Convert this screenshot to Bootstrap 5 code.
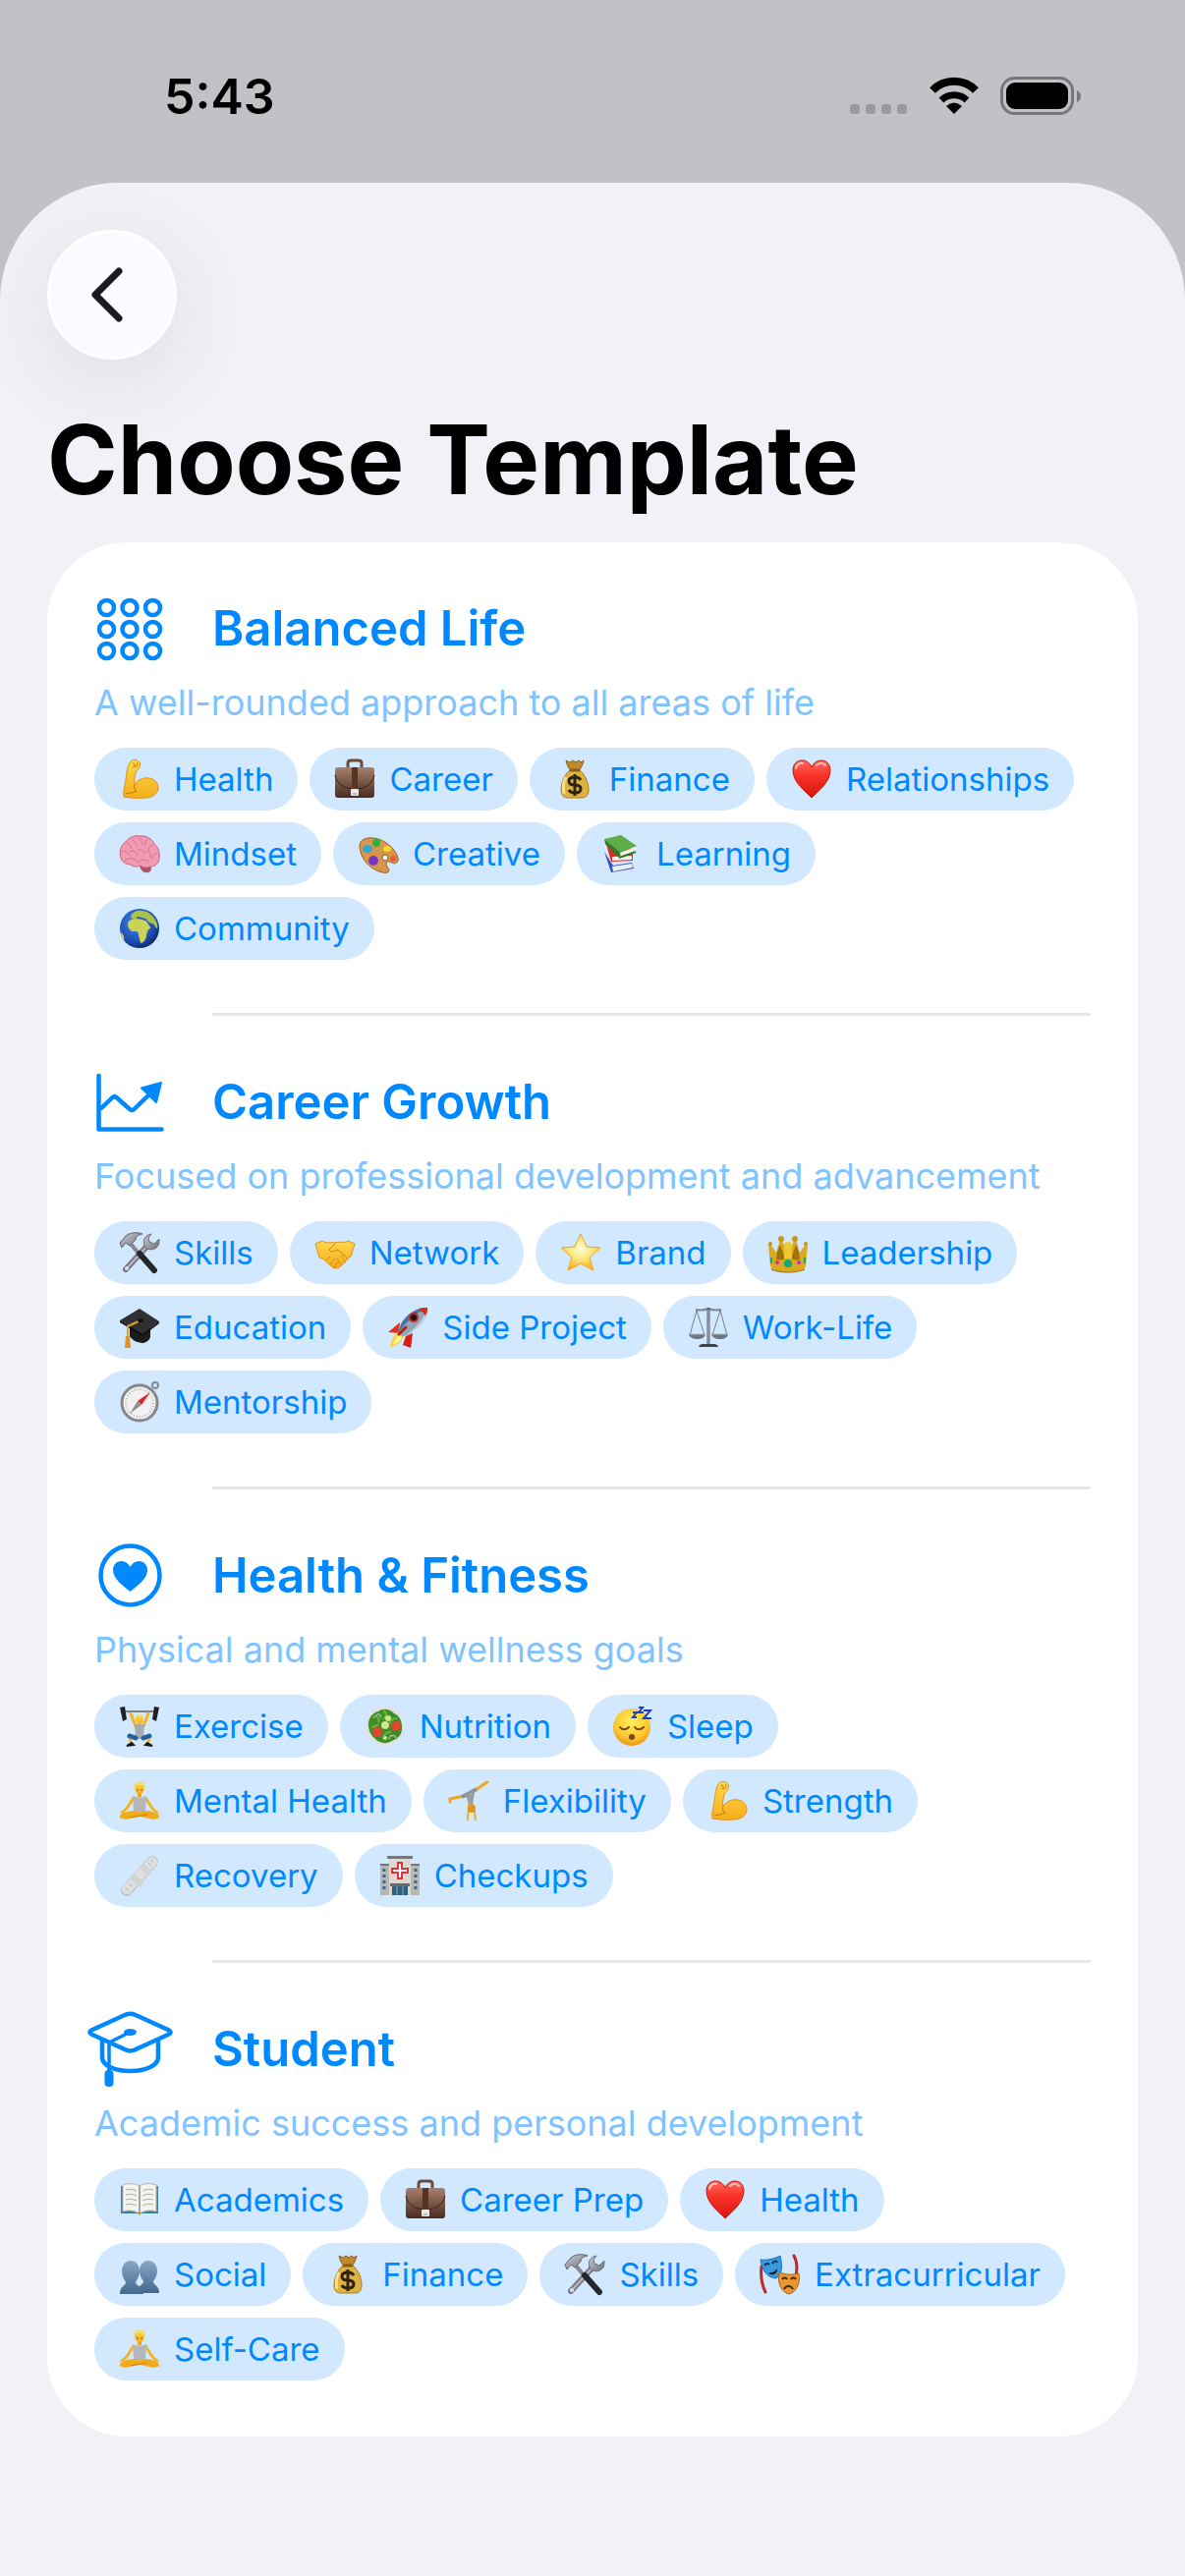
<!DOCTYPE html>
<html lang="en">
<head>
    <meta charset="UTF-8">
    <meta name="viewport" content="width=device-width, initial-scale=1.0">
    <title>Choose Template</title>
    <link rel="stylesheet" href="https://cdn.jsdelivr.net/npm/bootstrap@5.3.0/dist/css/bootstrap.min.css">
    <style>
        body {
            background-color: #c2c1c6;
            font-family: Inter, "Liberation Sans", sans-serif;
            color: #000;
        }
        /* Status bar */
        .status-bar {
            height: 186px;
            padding: 10px 106px 0 167px;
        }
        .status-time {
            font-size: 50px;
            font-weight: 600;
            line-height: 60px;
        }
        /* Sheet */
        .sheet {
            background-color: #f2f1f7;
            border-radius: 120px 120px 0 0;
            padding: 48px 48px 120px;
        }
        .btn-back {
            width: 132px;
            height: 132px;
            background-color: #fbfaff;
            border: 3px solid #fff;
            box-shadow: 0 20px 90px rgba(0, 0, 0, .09);
        }
        .btn-back:hover {
            background-color: #fff;
            border-color: #fff;
        }
        .sheet-title {
            font-size: 97px;
            font-weight: 700;
            line-height: 120px;
            margin: 42px 0 24px;
        }
        /* Template list */
        .template-list {
            --bs-list-group-bg: #fff;
            border-radius: 80px;
            overflow: hidden;
        }
        .template-item {
            padding: 44px 48px 0;
            border: 0;
            color: #08f;
        }
        .template-head {
            height: 88px;
            gap: 48px;
        }
        .template-icon {
            width: 72px;
            height: 88px;
            overflow: visible;
            fill: none;
            stroke: #08f;
            stroke-linecap: round;
            stroke-linejoin: round;
        }
        .template-name {
            font-size: 49px;
            font-weight: 600;
            line-height: 60px;
        }
        .template-text {
            font-size: 36px;
            line-height: 62px;
            margin-bottom: 15px;
            color: #80c3ff;
        }
        .chip-list {
            gap: 12px;
            padding: 0 8px 54px 0;
        }
        .chip {
            height: 64px;
            padding: 0 25px 0 24px;
            gap: 13px;
            border-radius: 32px;
            background-color: #d1e8ff;
            font-size: 33px;
            line-height: 40px;
        }
        .chip svg {
            width: 44px;
            height: 44px;
        }
        .template-rule {
            height: 3px;
            margin-left: 120px;
            background-color: #e6e6e6;
        }
        .template-item:last-child .template-rule {
            background-color: transparent;
        }
    </style>
</head>
<body class="d-flex flex-column min-vh-100">
    <!-- Emoji used on the chips -->
    <svg width="0" height="0" class="d-block" aria-hidden="true">
        <defs>
            <linearGradient id="gold" x1="0" y1="0" x2="0" y2="1"><stop offset="0" stop-color="#ffe04a"/><stop offset="1" stop-color="#f3a31b"/></linearGradient>
            <linearGradient id="skin" x1="0" y1="0" x2="0" y2="1"><stop offset="0" stop-color="#ffd84a"/><stop offset="1" stop-color="#f5ad1c"/></linearGradient>
            <linearGradient id="leather" x1="0" y1="0" x2="0" y2="1"><stop offset="0" stop-color="#a5806c"/><stop offset="1" stop-color="#4a2c20"/></linearGradient>
            <linearGradient id="steel" x1="0" y1="0" x2="1" y2="1"><stop offset="0" stop-color="#c9ccd2"/><stop offset="1" stop-color="#6d7077"/></linearGradient>
            <linearGradient id="red" x1="0" y1="0" x2="0" y2="1"><stop offset="0" stop-color="#ff6a5e"/><stop offset=".4" stop-color="#fb3328"/><stop offset="1" stop-color="#d3160f"/></linearGradient>
            <linearGradient id="slate" x1="0" y1="0" x2="0" y2="1"><stop offset="0" stop-color="#86a7c6"/><stop offset="1" stop-color="#45688f"/></linearGradient>
            <radialGradient id="sea" cx=".4" cy=".35" r=".7"><stop offset="0" stop-color="#3f86e8"/><stop offset=".7" stop-color="#1c4cb4"/><stop offset="1" stop-color="#10245f"/></radialGradient>
            <radialGradient id="face" cx=".5" cy=".35" r=".65"><stop offset="0" stop-color="#fff25c"/><stop offset=".7" stop-color="#fdc530"/><stop offset="1" stop-color="#ee9411"/></radialGradient>
            <radialGradient id="shine" cx=".5" cy=".4" r=".6"><stop offset="0" stop-color="#fffde0"/><stop offset=".5" stop-color="#ffe77a"/><stop offset="1" stop-color="#f9b21c"/></radialGradient>
        </defs>

        <symbol id="e-muscle" viewBox="0 0 44 44">
            <path d="M13 4c2-2 6-2 8 0 2 1 2 4 1 6-1 3-4 3-4 6-1 4-2 8-1 11 3-4 9-7 15-6 6 1 9 6 9 10 0 6-6 10-13 10-9 1-16 0-22-1-1-4 1-11 2-18 1-6 1-13 5-18z" fill="url(#skin)" stroke="#dd9415"/>
            <path d="M15 6c3 0 3 3 0 4M19 5c2 1 1 4-2 5M17 27c-1 4 0 6 2 8M8 37c4-1 8-1 11-3" fill="none" stroke="#bf7a10"/>
        </symbol>
        <symbol id="e-briefcase" viewBox="0 0 44 44">
            <path d="M15 11V6q0-3 3-3h8q3 0 3 3v5" fill="none" stroke="#6e4a39" stroke-width="3"/>
            <rect x="2" y="10" width="40" height="31" rx="3" fill="url(#leather)"/>
            <path d="M2 18c2 9 9 14 20 14s18-5 20-14" fill="none" stroke="#3b2118" stroke-width="1"/>
            <path d="M19 10h6v22h-6z" fill="#56341f"/>
            <rect x="18" y="32" width="8" height="7" rx="1" fill="#e9e9ea"/>
            <path d="M20 37h4" stroke="#8b8b8b"/>
        </symbol>
        <symbol id="e-money" viewBox="0 0 44 44">
            <path d="M13 3l4 2 3-2 3 2 3-2 2 2 3-2c-1 5-3 8-5 11h-8c-2-3-4-6-5-11z" fill="#c08a2c" stroke="#8b5e17"/>
            <path d="M17 13h10c6 5 9 13 9 20 0 6-3 8-7 8H15c-4 0-7-2-7-8 0-7 3-15 9-20z" fill="#dfb143" stroke="#a97b1e"/>
            <path d="M13 20c-3 5-3 12-2 17" fill="none" stroke="#fae184" stroke-width="3"/>
            <path d="M17 13h10" stroke="#8b5e17" stroke-width="3"/>
            <path d="M28 23c-1-2-3-3-6-3-3 0-6 1-6 4s3 4 6 4 6 1 6 4-3 4-6 4-5-1-6-3M22 17v22" fill="none" stroke="#2e2410" stroke-width="3"/>
        </symbol>
        <symbol id="e-heart" viewBox="0 0 44 44">
            <path d="M22 41C15 34 3 25 3 13 3 7 7 3 12 3c4 0 8 2 10 7 2-5 6-7 10-7 5 0 9 4 9 10 0 12-12 21-19 28z" fill="url(#red)" stroke="#c5140d"/>
            <path d="M6 11c1-4 4-6 7-5M27 8c3-3 6-3 9 0" fill="none" stroke="#ffc2bb" stroke-width="2" stroke-linecap="round"/>
        </symbol>
        <symbol id="e-brain" viewBox="0 0 44 44">
            <path d="M22 34c6-2 12-1 12 3 0 3-3 5-6 4-3 0-5-3-6-7z" fill="#a85564"/>
            <path d="M3 26C1 20 3 13 8 10c3-5 9-7 14-6 7-1 13 3 15 8 4 3 6 9 5 14 0 6-4 9-9 9-4 2-8 1-10-1-4 2-8 1-10-1-5 0-9-3-10-7z" fill="#f09bb2" stroke="#c9607c"/>
            <path d="M9 12c3 0 5 2 4 5M15 7c1 3 4 3 4 7M22 5c-1 4 3 4 3 8M30 7c-3 2-1 4-3 7M36 13c-4 0-5 3-4 6M4 20c4-2 6 0 7 3M12 20c4-2 7 0 8 4M20 18c4-1 7 1 6 5M28 20c4-1 6 2 5 6M40 22c-4 0-5 2-5 5M7 29c4-3 9-3 12 0M20 31c4-4 9-3 12-1" fill="none" stroke="#d6708c"/>
        </symbol>
        <symbol id="e-palette" viewBox="0 0 44 44">
            <path d="M3 14c0-6 6-9 14-8 11 1 22 10 25 20 1 5-3 7-6 5-3-1-6-2-6 1s3 5 3 7-3 3-7 2C13 38 3 26 3 14z" fill="#d6964b" stroke="#9a6428"/>
            <ellipse cx="29" cy="26" rx="3" ry="3" fill="#e6f1fc" stroke="#8c5a22"/>
            <ellipse cx="11" cy="17" rx="5" ry="4" fill="#31a6dc"/>
            <ellipse cx="20" cy="11" rx="4" ry="4" fill="#2fb23d"/>
            <ellipse cx="31" cy="17" rx="4" ry="3" fill="#f3d92e"/>
            <ellipse cx="17" cy="29" rx="5" ry="5" fill="#7a34c4"/>
            <ellipse cx="37" cy="27" rx="3" ry="3" fill="#ee5a3a"/>
        </symbol>
        <symbol id="e-books" viewBox="0 0 44 44">
            <path d="M4 20l7 21 23-4-2-6-19 3z" fill="#3a55b5"/>
            <path d="M12 35l20-3 1 4-20 4z" fill="#edf0f7"/>
            <path d="M6 12l5 18 22-1V17z" fill="#d92c22"/>
            <path d="M12 25l20-1v4l-20 1z" fill="#f6efe9"/>
            <path d="M4 7L21 3l16 11-17 7z" fill="#5cae4b"/>
            <path d="M4 7l16 14-1 5L5 12z" fill="#2e7d2c"/>
            <path d="M20 21l16-6v5l-15 6z" fill="#f2f2ee"/>
            <path d="M19 26l17-6" stroke="#2e7d2c" stroke-width="2"/>
        </symbol>
        <symbol id="e-globe" viewBox="0 0 44 44">
            <circle cx="22" cy="22" r="20" fill="url(#sea)"/>
            <path d="M10 17c1-4 6-5 10-5 4 0 8 1 10 4 1 3 4 4 3 6-3 1-3 4-4 7 0 4-3 7-5 8-2-1-2-5-3-8 0-3-1-4-4-4-4 1-7-3-7-8z" fill="#cbd357"/>
            <path d="M13 10c1-4 6-7 11-6 6 0 11 4 14 9 2 4 3 7 2 9-2 0-2-4-5-5-2 0-4-2-6-4-3-1-4-3-7-2-2 2-6 3-9-1z" fill="#a9c24a"/>
            <path d="M3 26c2 1 4 5 3 8-2-2-3-5-3-8z" fill="#cbd357"/>
            <path d="M19 11c4 0 7 2 10 2" stroke="#2a62c4" stroke-width="2"/>
        </symbol>
        <symbol id="e-tools" viewBox="0 0 44 44">
            <path d="M30 15L8 39" stroke="#7b7681" stroke-width="6" stroke-linecap="round"/>
            <path d="M30 15L9 38" stroke="#b9bac1" stroke-width="2"/>
            <path d="M34 3c-6 1-9 6-7 12 2 4 8 5 12 2 3-2 3-6 3-9l-5 5-5-2-1-4z" fill="url(#steel)" stroke="#6b6e75"/>
            <circle cx="9" cy="38" r="2" fill="#d1e8ff"/>
            <path d="M13 13l9 11" stroke="#858891" stroke-width="4"/>
            <path d="M22 23l15 17" stroke="#25262a" stroke-width="6" stroke-linecap="round"/>
            <path d="M2 12l6-7C13 1 20 1 25 3c-5 1-7 3-7 6l-6 6-4-3-4 5z" fill="url(#steel)" stroke="#62656c"/>
        </symbol>
        <symbol id="e-handshake" viewBox="0 0 44 44">
            <path d="M2 13l7-3c4 3 8 1 13 2 5-2 9 1 13-2l7 3-4 13c-3 1-4 3-6 6-3 3-6 6-10 6-4-1-7-5-10-8-2-2-4-2-6-3z" fill="url(#skin)" stroke="#d8920f"/>
            <path d="M22 13l-6 6c1 3 5 2 8 0 4 2 8 6 11 10M13 30l4-4M17 34l4-5M21 37l3-5M28 25l4 6M24 28l4 6" fill="none" stroke="#c9850f" stroke-linecap="round"/>
        </symbol>
        <symbol id="e-star" viewBox="0 0 44 44">
            <path d="M22 3l6 13 14 1-11 10 4 13-13-7-13 7 4-13L2 17l14-1z" fill="url(#shine)" stroke="#eda41b" stroke-linejoin="round"/>
        </symbol>
        <symbol id="e-crown" viewBox="0 0 44 44">
            <path d="M4 36L2 14l2-1 6 9 4-13h2l4 12h4l4-12h2l4 13 6-9 2 1-2 22z" fill="#d9aa20"/>
            <path d="M10 32c0-7 1-12 4-18l5 14zM34 32c0-7-1-12-4-18l-5 14z" fill="#a2710c"/>
            <path d="M4 27c6 4 30 4 36 0l-1 12c-8 4-26 4-34 0z" fill="#d9aa20"/>
            <g fill="#c99713"><circle cx="4" cy="13" r="2"/><circle cx="15" cy="8" r="3"/><circle cx="29" cy="8" r="3"/><circle cx="40" cy="13" r="2"/></g>
            <path d="M18 28V15q0-4 4-4t4 4v13z" fill="#edc832"/>
            <circle cx="22" cy="33" r="4" fill="#18a678"/>
            <circle cx="11" cy="32" r="2" fill="#c92fb0"/><circle cx="33" cy="32" r="2" fill="#c92fb0"/>
            <path d="M5 27v6M39 27v6" stroke="#18a678" stroke-width="2"/>
            <path d="M5 39c8 4 26 4 34 0" fill="none" stroke="#9b6c0b"/>
        </symbol>
        <symbol id="e-gradcap" viewBox="0 0 44 44">
            <path d="M12 18v13c3 5 9 7 14 7 4-1 6-3 7-6V18z" fill="#1c1c1e"/>
            <path d="M22 3l20 13-17 13L2 15z" fill="#303033"/>
            <path d="M2 15l23 14 17-13v2L25 31 2 17z" fill="#0c0c0d"/>
            <path d="M23 15L10 21v11" fill="none" stroke="#e1a02a" stroke-width="2"/>
            <path d="M8 31h4l1 12H7z" fill="#dd952a"/>
            <ellipse cx="23" cy="15" rx="3" ry="2" fill="#111"/>
        </symbol>
        <symbol id="e-rocket" viewBox="0 0 44 44">
            <path d="M14 17L2 27l11 1z" fill="#e3311c"/><path d="M27 28l-2 15-8-3 3-9z" fill="#d51f14"/>
            <path d="M12 27c-5 4-7 9-8 16 6-3 12-6 14-12z" fill="#ffd22c"/>
            <path d="M13 30c-3 2-5 6-6 10 4-2 7-4 9-7z" fill="#fff39b"/>
            <path d="M42 2C31 2 21 8 15 19c-2 4-3 7-2 9l3 3c4 0 8-2 12-6C38 18 42 11 42 2z" fill="#91a5b9"/>
            <path d="M42 2C31 2 21 8 15 19l-2 8c6-9 15-18 29-25z" fill="#4474a4"/>
            <path d="M42 2c-1 8-4 15-9 20L20 30c10-7 18-16 22-28z" fill="#c9d0d8"/>
            <path d="M42 2c-3 0-6 0-9 1l7 7c2-3 2-5 2-8z" fill="#d1301f"/>
            <circle cx="28" cy="12" r="5" fill="#c6251a"/><circle cx="28" cy="12" r="3" fill="#19191d"/>
            <path d="M13 29l7-7" stroke="#b81d12" stroke-width="3" stroke-linecap="round"/>
        </symbol>
        <symbol id="e-scale" viewBox="0 0 44 44">
            <path d="M9 4c5 1 8 1 13-1 5 2 8 2 13 1" fill="none" stroke="#7e8791" stroke-width="2"/>
            <path d="M22 2v38" stroke="#59626e" stroke-width="3"/><path d="M22 4v35" stroke="#b3bdc8"/>
            <path d="M10 5L3 30M10 5l8 25M34 5l-8 25M34 5l7 25" fill="none" stroke="#75808c"/>
            <path d="M2 29h17c-1 4-4 5-8 5s-8-1-9-5zM25 29h17c-1 4-4 5-8 5s-8-1-9-5z" fill="#6d7783"/>
            <path d="M2 29h17M25 29h17" stroke="#aab4be"/>
            <path d="M12 42c1-4 5-3 10-3s9-1 10 3z" fill="#3d4650"/>
        </symbol>
        <symbol id="e-compass" viewBox="0 0 44 44">
            <circle cx="38" cy="5" r="3" fill="none" stroke="#898b90" stroke-width="2"/>
            <circle cx="22" cy="23" r="18" fill="#f2f1ef" stroke="#85878c" stroke-width="3"/>
            <circle cx="22" cy="23" r="14" fill="none" stroke="#b5b5b5" stroke-width="2" stroke-dasharray="1 2"/>
            <path d="M33 12L20 21l4 4z" fill="#e4222b"/><path d="M12 34l8-13 4 4z" fill="#8d9095"/>
        </symbol>
        <symbol id="e-lifter" viewBox="0 0 44 44">
            <path d="M6 7h32" stroke="#7b8088" stroke-width="2"/>
            <path d="M2 3l5-1 2 13-4 2zM42 3l-5-1-2 13 4 2z" fill="#202126"/>
            <path d="M13 9l5 13M31 9l-5 13" stroke="#f3b21f" stroke-width="3" stroke-linecap="round"/>
            <path d="M17 20h10l-1 15h-8z" fill="#a8abb1"/>
            <ellipse cx="22" cy="15" rx="4" ry="5" fill="url(#skin)"/>
            <path d="M18 13c1-4 7-5 8 0-3-1-5-1-8 0z" fill="#f4df69"/>
            <path d="M18 34l-6-2M26 34l6-2" stroke="#235f9f" stroke-width="5" stroke-linecap="round"/>
            <path d="M12 35l2 5M32 35l-2 5" stroke="#f3b21f" stroke-width="3"/>
            <path d="M9 42l7-1-2-2zM35 42l-7-1 2-2z" fill="#16181c" stroke="#16181c" stroke-width="2"/>
        </symbol>
        <symbol id="e-salad" viewBox="0 0 44 44">
            <circle cx="22" cy="22" r="20" fill="#dfe2e2"/>
            <path d="M5 20c0-7 5-12 10-13 5-4 13-2 16 2 5 2 8 7 8 13 1 8-4 13-10 15-6 4-14 2-18-3-4-3-6-8-6-14z" fill="#3d8e29"/>
            <path d="M9 14c4-4 8 0 6 4M20 6c4 2 4 6 0 9M34 14c-5 0-7 2-7 6M20 35c0-5 3-7 8-7M8 23c4 0 5-1 7-3" fill="none" stroke="#6cb236" stroke-width="2"/>
            <circle cx="14" cy="28" r="5" fill="#e0452e"/><circle cx="33" cy="22" r="5" fill="#e0452e"/>
            <circle cx="25" cy="14" r="3" fill="#cbe78c"/><circle cx="22" cy="21" r="4" fill="#cbe78c"/><circle cx="22" cy="34" r="2" fill="#cbe78c"/>
            <path d="M12 12c3-4 6-2 5 1M26 35c0-4 6-5 7-1" fill="none" stroke="#efe6ee"/>
        </symbol>
        <symbol id="e-sleep" viewBox="0 0 44 44">
            <circle cx="21" cy="23" r="19" fill="url(#face)"/>
            <path d="M9 23c2 3 6 3 9 0M24 23c2 3 6 3 9 0" fill="none" stroke="#7a470f" stroke-width="2" stroke-linecap="round"/>
            <ellipse cx="21" cy="33" rx="3" ry="3" fill="#7a470f"/>
            <path d="M22 8h4l-4 5h4M28 3h4l-4 5h5M33 6h7l-7 8h8" fill="none" stroke="#203fb8" stroke-width="2"/>
        </symbol>
        <symbol id="e-yoga" viewBox="0 0 44 44">
            <path d="M16 19c-4 4-4 10-12 15M28 19c4 4 4 10 12 15" fill="none" stroke="#f4b421" stroke-width="3" stroke-linecap="round"/>
            <path d="M20 12h4v6h-4z" fill="#eda51a"/>
            <ellipse cx="22" cy="9" rx="5" ry="6" fill="url(#skin)"/>
            <path d="M16 8c0-7 12-8 12 0-3-3-9-3-12 0z" fill="#f4df69"/>
            <path d="M19 11h2M23 11h2" stroke="#8a5510"/>
            <path d="M15 17q7 3 14 0l-1 16H16z" fill="#b4b6ba"/>
            <path d="M4 38c7-5 14-4 19-2l14 3M40 38c-7-5-14-4-19-2L7 39" fill="none" stroke="#f1aa1b" stroke-width="4" stroke-linecap="round"/>
            <path d="M12 39l18-3" stroke="#c98610"/>
        </symbol>
        <symbol id="e-cartwheel" viewBox="0 0 44 44">
            <path d="M3 20l19-4L39 4" fill="none" stroke="#eda91e" stroke-width="3" stroke-linecap="round"/>
            <path d="M3 20v3M39 4l2-1" stroke="#eda91e" stroke-width="3" stroke-linecap="round"/>
            <path d="M15 18l8-4 7-4" fill="none" stroke="#8f9297" stroke-width="4"/>
            <path d="M19 16l9-4-2 14h-4z" fill="#9a9ca1"/>
            <path d="M22 26l-1 15M27 26l2 15" stroke="#f1b021" stroke-width="2" stroke-linecap="round"/>
            <circle cx="25" cy="30" r="4" fill="#dd951b"/>
        </symbol>
        <symbol id="e-bandage" viewBox="0 0 44 44">
            <path d="M9 37L35 8" stroke="#c5c6c8" stroke-width="12" stroke-linecap="round"/>
            <path d="M9 36L35 8" stroke="#dedfe0" stroke-width="10" stroke-linecap="round"/>
            <path d="M16 20l11 9-5 5-10-9zM21 14l10 9 4-5-9-9z" fill="#d3d4d6"/>
            <path d="M8 35l2 2M31 9l2 2M34 6l2 2M12 31l2 2" stroke="#aaa" stroke-linecap="round"/>
        </symbol>
        <symbol id="e-hospital" viewBox="0 0 44 44">
            <path d="M2 11h10v31H2zM32 11h10v31H32z" fill="#b8b7b1"/>
            <path d="M2 10h10v2H2zM32 10h10v2H32zM9 2h26v3H9z" fill="#77777a"/>
            <path d="M11 5h22v37H11z" fill="#dad8d1"/>
            <path d="M6 15v24M38 15v24" stroke="#3f6788" stroke-width="3" stroke-dasharray="3 3"/>
            <path d="M12 30h20v3H12z" fill="#686a70"/><path d="M14 33h16v9H14z" fill="#2f607f"/>
            <path d="M19 33v9M25 33v9" stroke="#88a9bd"/>
            <path d="M20 9h4v6h6v4h-6v6h-4v-6h-6v-4h6z" fill="#fff" stroke="#e0303a" stroke-width="2"/>
        </symbol>
        <symbol id="e-openbook" viewBox="0 0 44 44">
            <path d="M3 8h38v28H3z" fill="#3f7fa0"/>
            <path d="M5 7c6-2 12-2 17 1 5-3 11-3 17-1v27c-6-2-12-1-17 2-5-3-11-4-17-2z" fill="#f4f3ee" stroke="#b6b5b0"/>
            <path d="M22 8v28" stroke="#a5a49f" stroke-width="2"/>
            <path d="M8 12c4-1 7-1 11 1M8 17c4-1 7-1 11 1M8 22c4-1 7-1 11 1M8 27c4-1 7-1 11 1M25 13c4-2 7-2 11-1M25 18c4-2 7-2 11-1M25 23c4-2 7-2 11-1M25 28c4-2 7-2 11-1" fill="none" stroke="#a9a9aa"/>
            <path d="M20 35h4l-2 3z" fill="#b98b1d"/>
        </symbol>
        <symbol id="e-busts" viewBox="0 0 44 44">
            <path d="M20 41c0-9 6-8 6-12-2-3-4-6-4-10 0-7 4-11 9-11s9 4 9 11c0 4-2 7-4 10 0 4 6 4 6 12z" fill="url(#slate)"/>
            <path d="M2 42c0-9 6-8 6-12-2-3-4-7-4-11 0-7 4-11 9-11s9 4 9 11c0 4-2 8-4 11 0 4 8 3 8 12z" fill="url(#slate)"/>
        </symbol>
        <symbol id="e-masks" viewBox="0 0 44 44">
            <path d="M3 14c-1 9 0 18 4 26M36 3c4 7 4 14 1 24" fill="none" stroke="#c3281e" stroke-width="3" stroke-linecap="round"/>
            <path d="M2 7c7 1 14-1 20-4 2 9 3 18-4 23C9 26 3 17 2 7z" fill="#3699e2" stroke="#1f6fb4"/>
            <path d="M6 13c2-3 4-2 5-1M14 11c2-3 4-3 5-1" fill="none" stroke="#112f55" stroke-width="2"/>
            <path d="M10 20c4 1 7-1 9-4 1 5-6 9-9 4z" fill="#15171d"/>
            <path d="M21 20c6 2 13 3 20 1 2 9-2 19-10 21-9-2-12-13-10-22z" fill="#e7972e" stroke="#ae6415"/>
            <path d="M24 27c1-2 4-2 5 0M33 27c1-2 4-2 5 0M26 37c2-4 7-4 9 0" fill="none" stroke="#4c2807" stroke-width="2"/>
        </symbol>
    </svg>

    <header class="status-bar d-flex align-items-center justify-content-between">
        <span class="status-time">5:43</span>
        <svg width="236" height="44" viewBox="0 0 236 44" role="img" aria-label="Wi-Fi on, battery full">
            <g fill="#9b9a9d">
                <rect x="1" y="30" width="10" height="10" rx="3"/>
                <rect x="17" y="30" width="10" height="10" rx="3"/>
                <rect x="33" y="30" width="10" height="10" rx="3"/>
                <rect x="49" y="30" width="10" height="10" rx="3"/>
            </g>
            <path d="M85 16A31 31 0 0 1 129 16" fill="none" stroke="#000" stroke-width="8"/>
            <path d="M94 26A19 19 0 0 1 120 26" fill="none" stroke="#000" stroke-width="7"/>
            <path d="M99 32Q107 25 115 32L107 40Z"/>
            <rect x="155.5" y="3.5" width="72" height="36" rx="13" fill="none" stroke="#777679" stroke-width="3"/>
            <rect x="160" y="8" width="63" height="27" rx="9"/>
            <path d="M232 16q4 2 4 6t-4 6z" fill="#777679"/>
        </svg>
    </header>

    <main class="sheet flex-grow-1">
        <button type="button" class="btn btn-back rounded-circle d-flex align-items-center justify-content-center p-0" aria-label="Back">
            <svg width="60" height="60" viewBox="0 0 60 60" fill="none" stroke="#1a1a1f" stroke-width="7" stroke-linecap="round" stroke-linejoin="round"><path d="M37 6L13 30l24 24"/></svg>
        </button>
        <h1 class="sheet-title">Choose Template</h1>

        <div class="list-group list-group-flush template-list">
            <a href="#" class="list-group-item template-item">
                <div class="template-head d-flex align-items-center">
                    <svg class="template-icon" viewBox="0 0 72 88" stroke-width="4.5" aria-hidden="true">
                        <circle cx="12.5" cy="22.5" r="7.5"/><circle cx="36" cy="22.5" r="7.5"/><circle cx="59.5" cy="22.5" r="7.5"/>
                        <circle cx="12.5" cy="44.5" r="7.5"/><circle cx="36" cy="44.5" r="7.5"/><circle cx="59.5" cy="44.5" r="7.5"/>
                        <circle cx="12.5" cy="66.5" r="7.5"/><circle cx="36" cy="66.5" r="7.5"/><circle cx="59.5" cy="66.5" r="7.5"/>
                    </svg>
                    <h2 class="template-name mb-0">Balanced Life</h2>
                </div>
                <p class="template-text">A well-rounded approach to all areas of life</p>
                <div class="chip-list d-flex flex-wrap">
                    <span class="chip d-flex align-items-center"><svg><use href="#e-muscle"/></svg>Health</span>
                    <span class="chip d-flex align-items-center"><svg><use href="#e-briefcase"/></svg>Career</span>
                    <span class="chip d-flex align-items-center"><svg><use href="#e-money"/></svg>Finance</span>
                    <span class="chip d-flex align-items-center"><svg><use href="#e-heart"/></svg>Relationships</span>
                    <span class="chip d-flex align-items-center"><svg><use href="#e-brain"/></svg>Mindset</span>
                    <span class="chip d-flex align-items-center"><svg><use href="#e-palette"/></svg>Creative</span>
                    <span class="chip d-flex align-items-center"><svg><use href="#e-books"/></svg>Learning</span>
                    <span class="chip d-flex align-items-center"><svg><use href="#e-globe"/></svg>Community</span>
                </div>
                <div class="template-rule"></div>
            </a>

            <a href="#" class="list-group-item template-item">
                <div class="template-head d-flex align-items-center">
                    <svg class="template-icon" viewBox="0 0 72 88" stroke-width="4.5" aria-hidden="true">
                        <path d="M4.5 17v54.5H68.5"/>
                        <path d="M6 51L18.5 39q2-2 4 0L36 51q2.500 2 4.500 0L56 36" stroke-linecap="butt"/>
                        <path d="M48 29.5L68 24l-5 20z" fill="#08f" stroke-width="2"/>
                    </svg>
                    <h2 class="template-name mb-0">Career Growth</h2>
                </div>
                <p class="template-text">Focused on professional development and advancement</p>
                <div class="chip-list d-flex flex-wrap">
                    <span class="chip d-flex align-items-center"><svg><use href="#e-tools"/></svg>Skills</span>
                    <span class="chip d-flex align-items-center"><svg><use href="#e-handshake"/></svg>Network</span>
                    <span class="chip d-flex align-items-center"><svg><use href="#e-star"/></svg>Brand</span>
                    <span class="chip d-flex align-items-center"><svg><use href="#e-crown"/></svg>Leadership</span>
                    <span class="chip d-flex align-items-center"><svg><use href="#e-gradcap"/></svg>Education</span>
                    <span class="chip d-flex align-items-center"><svg><use href="#e-rocket"/></svg>Side Project</span>
                    <span class="chip d-flex align-items-center"><svg><use href="#e-scale"/></svg>Work-Life</span>
                    <span class="chip d-flex align-items-center"><svg><use href="#e-compass"/></svg>Mentorship</span>
                </div>
                <div class="template-rule"></div>
            </a>

            <a href="#" class="list-group-item template-item">
                <div class="template-head d-flex align-items-center">
                    <svg class="template-icon" viewBox="0 0 72 88" stroke-width="4.5" aria-hidden="true">
                        <circle cx="36.5" cy="43.5" r="30"/>
                        <path d="M36.5 60C29 54 19 47 19 38c0-5 3.500-9 8.500-9 4 0 7 2 9 6 2-4 5-6 9-6 5 0 8.500 4 8.500 9 0 9-10 16-17.500 22z" fill="#08f" stroke="none"/>
                    </svg>
                    <h2 class="template-name mb-0">Health &amp; Fitness</h2>
                </div>
                <p class="template-text">Physical and mental wellness goals</p>
                <div class="chip-list d-flex flex-wrap">
                    <span class="chip d-flex align-items-center"><svg><use href="#e-lifter"/></svg>Exercise</span>
                    <span class="chip d-flex align-items-center"><svg><use href="#e-salad"/></svg>Nutrition</span>
                    <span class="chip d-flex align-items-center"><svg><use href="#e-sleep"/></svg>Sleep</span>
                    <span class="chip d-flex align-items-center"><svg><use href="#e-yoga"/></svg>Mental Health</span>
                    <span class="chip d-flex align-items-center"><svg><use href="#e-cartwheel"/></svg>Flexibility</span>
                    <span class="chip d-flex align-items-center"><svg><use href="#e-muscle"/></svg>Strength</span>
                    <span class="chip d-flex align-items-center"><svg><use href="#e-bandage"/></svg>Recovery</span>
                    <span class="chip d-flex align-items-center"><svg><use href="#e-hospital"/></svg>Checkups</span>
                </div>
                <div class="template-rule"></div>
            </a>

            <a href="#" class="list-group-item template-item">
                <div class="template-head d-flex align-items-center">
                    <svg class="template-icon" viewBox="0 0 72 88" stroke-width="4.5" aria-hidden="true">
                        <path d="M31 9Q36.500 6.500 42 9L75 24Q80 26.500 75 29L42 44Q36.500 47 31 44L-2 29Q-7 26.500-2 24Z"/>
                        <path d="M8 34v18c0 8 12 14 28.500 14S65 60 65 52V34"/>
                        <path d="M35 27L15 37v32" stroke-width="3.5"/>
                        <ellipse cx="36.5" cy="26.5" rx="6.5" ry="3.5" fill="#08f" stroke="none"/>
                        <rect x="10.5" y="65" width="9" height="17" rx="4" fill="#08f" stroke="none"/>
                    </svg>
                    <h2 class="template-name mb-0">Student</h2>
                </div>
                <p class="template-text">Academic success and personal development</p>
                <div class="chip-list d-flex flex-wrap">
                    <span class="chip d-flex align-items-center"><svg><use href="#e-openbook"/></svg>Academics</span>
                    <span class="chip d-flex align-items-center"><svg><use href="#e-briefcase"/></svg>Career Prep</span>
                    <span class="chip d-flex align-items-center"><svg><use href="#e-heart"/></svg>Health</span>
                    <span class="chip d-flex align-items-center"><svg><use href="#e-busts"/></svg>Social</span>
                    <span class="chip d-flex align-items-center"><svg><use href="#e-money"/></svg>Finance</span>
                    <span class="chip d-flex align-items-center"><svg><use href="#e-tools"/></svg>Skills</span>
                    <span class="chip d-flex align-items-center"><svg><use href="#e-masks"/></svg>Extracurricular</span>
                    <span class="chip d-flex align-items-center"><svg><use href="#e-yoga"/></svg>Self-Care</span>
                </div>
                <div class="template-rule"></div>
            </a>
        </div>
    </main>
    <script src="https://cdn.jsdelivr.net/npm/bootstrap@5.3.0/dist/js/bootstrap.bundle.min.js"></script>
</body>
</html>
